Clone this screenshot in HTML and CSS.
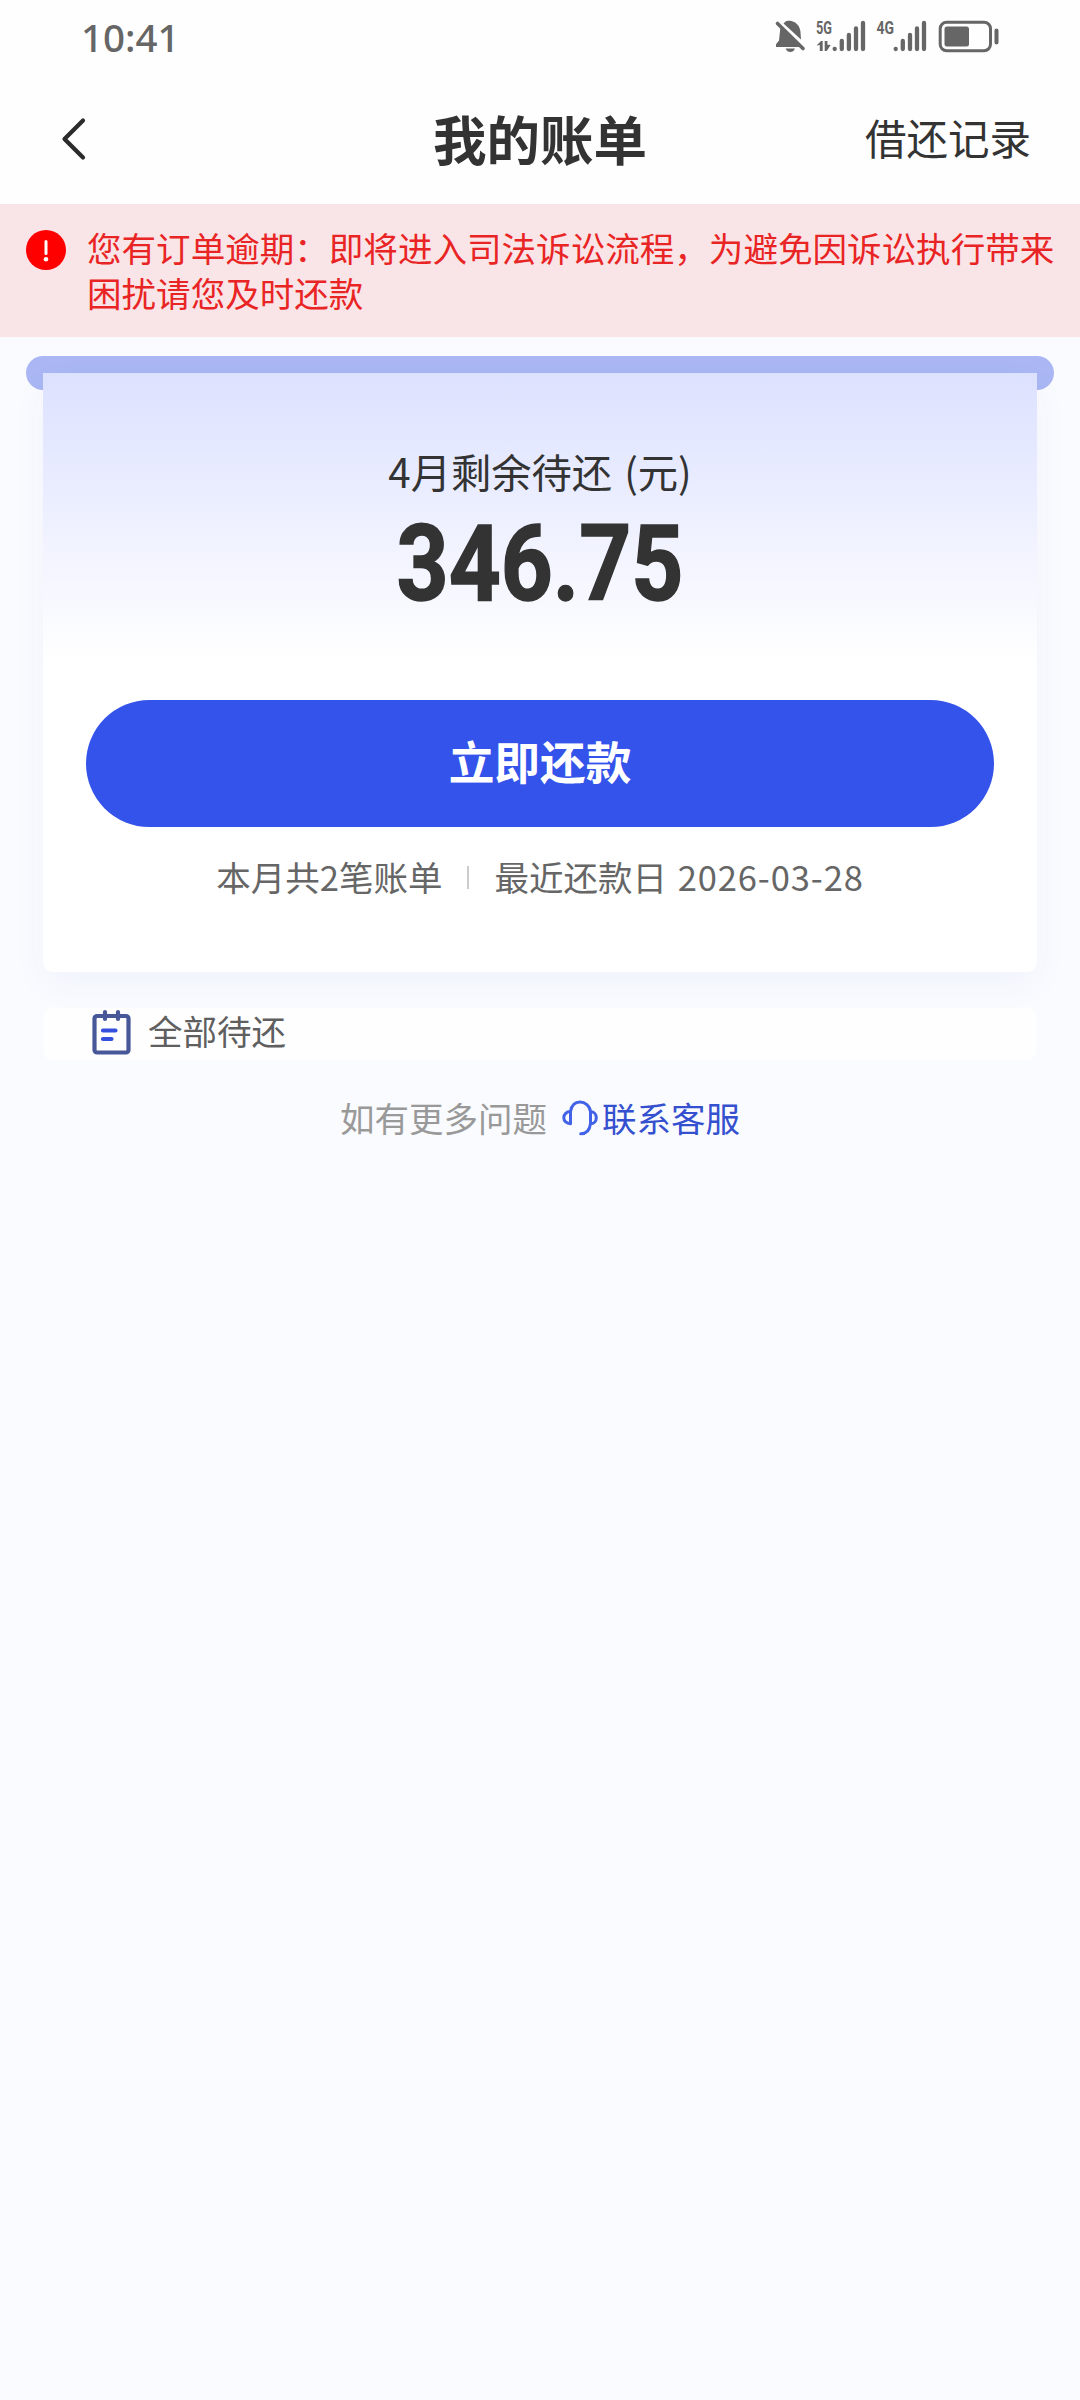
FILE: index.html
```html
<!DOCTYPE html>
<html lang="zh-CN">
<head>
<meta charset="utf-8">
<meta name="viewport" content="width=device-width">
<title>我的账单</title>
<link rel="stylesheet" href="styles.css">
</head>
<body>
<div class="status">
  <span class="time">10:41</span>
  <svg class="status-icons" width="232" height="70" viewBox="770 0 232 70" fill="#666">
    <!-- muted bell -->
    <path d="M785 22c1-1.200 3.800-1.800 6.500-1 5.500 1.500 8.500 5.500 9 11l.5 7.500-17.500-16z"/>
    <path d="M780.500 26.500l20.500 20.500h-25v-2.800l3-3.700z"/>
    <path d="M777.500 23.500l25.500 25" stroke="#666" stroke-width="3.600" stroke-linecap="round"/>
    <path d="M785.500 48.500h9.500c-1.800 4.700-7.600 4.700-9.500 0z"/>
    <!-- first SIM -->
    <text class="net" x="816" y="34.300" textLength="16" lengthAdjust="spacingAndGlyphs">5G</text>
    <path d="M816.500 45.500l4.500-4.500h1.700v10h-2.900v-6zM824.700 41h2.700v3.700l3.300.3-4 6h-2z"/>
    <g stroke="#666" stroke-width="4.300" stroke-linecap="round">
      <path d="M834.700 48.800v.2M841.800 41v8M848.900 35v14M856 28.500v20.500M863 23v26"/>
      <path d="M895.700 48.800v.2M902.800 41v8M910 35v14M917 28.500v20.500M924 23v26"/>
    </g>
    <!-- second SIM -->
    <text class="net" x="876.500" y="34.300" textLength="17.500" lengthAdjust="spacingAndGlyphs">4G</text>
    <!-- battery -->
    <rect x="940.200" y="22.200" width="50.300" height="28.600" rx="6.500" fill="none" stroke="#666" stroke-width="3"/>
    <rect x="944.500" y="26.500" width="24.500" height="20" rx="2.500"/>
    <rect x="994.500" y="28.500" width="4" height="16" rx="2"/>
  </svg>
</div>
<header class="nav">
  <svg class="back" width="30" height="48" viewBox="0 0 30 48" fill="none" stroke="#2b2b2b" stroke-width="4.200" stroke-linecap="round" stroke-linejoin="round"><path d="M23 5.500L4.500 24 23 42.500"/></svg>
  <h1 class="title">我的账单</h1>
  <a class="records">借还记录</a>
</header>
<section class="alert">
  <svg class="alert-icon" width="40" height="40" viewBox="0 0 40 40"><circle cx="20" cy="20" r="20" fill="#fe0000"/><path d="M20 11.500v12" stroke="#fff" stroke-width="3" stroke-linecap="round"/><circle cx="20" cy="29.300" r="2.300" fill="#fff"/></svg>
  <p class="alert-text">您有订单逾期：即将进入司法诉讼流程，为避免因诉讼执行带来困扰请您及时还款</p>
</section>
<main class="main">
  <div class="slot">
    <section class="card">
      <p class="label">4月剩余待还 (元)</p>
      <p class="amount">346.75</p>
      <button class="pay">立即还款</button>
      <p class="info"><span>本月共2笔账单</span><i class="sep"></i><span>最近还款日 <span class="date">2026-03-28</span></span></p>
    </section>
  </div>
  <section class="all">
    <svg width="40" height="46" viewBox="0 0 40 46" fill="none" stroke-linecap="round"><rect x="2.500" y="7" width="34" height="36.500" rx="2.500" stroke="#485798" stroke-width="4.200"/><path d="M13 3v7M26 3v7" stroke="#485798" stroke-width="4.200"/><path d="M11 21.500h12.500M11 30h8.500" stroke="#3450dc" stroke-width="4.200"/></svg>
    <span>全部待还</span>
  </section>
  <p class="help"><span>如有更多问题</span>
    <svg width="36" height="36" viewBox="0 0 36 36" fill="none" stroke="#4263e8" stroke-width="3" stroke-linecap="round" stroke-linejoin="round"><path d="M8.500 11.500v12.200C4.500 23.700 1.800 21 1.800 17.700s2.700-6.200 6.700-6.200C9.500 5.700 13 2 18 2s9.800 3.700 10.500 9.500c3.500.2 5.800 2.900 5.800 6.200s-2.300 6-5.800 6v-12.200M28.500 23.700c-.8 6.300-4.500 10-9.800 10"/></svg>
    <a class="link">联系客服</a></p>
</main>
</body>
</html>
```
FILE: styles.css
```css
* { box-sizing: border-box; }
body {
  margin: 0;
  min-height: 2400px;
  background: #f9fbff;
  color: #333;
  font-family: "Noto Sans CJK SC", sans-serif;
}
p, h1 { margin: 0; font-weight: 400; }
.status {
  display: flex;
  justify-content: space-between;
  height: 76px;
  padding: 0 78px 0 81px;
  background: #fefefe;
}
.time {
  color: #666;
  font: 500 38.500px/74px "Noto Sans", sans-serif;
}
.net { font: 700 19px "Roboto", sans-serif; }
.nav {
  display: grid;
  grid-template-columns: 1fr auto 1fr;
  align-items: center;
  height: 128px;
  padding: 0 49px 0 60px;
  background: #fefefe;
}
.back { margin-top: -3px; }
.title { margin: -5px 0 0 -11px; font-size: 53.500px; font-weight: 700; line-height: 122px; }
.records { justify-self: end; margin-top: -6px; font-size: 41.500px; }
.alert {
  display: flex;
  gap: 21px;
  height: 133px;
  padding: 21px 22px 0 26px;
  background: #f9e4e7;
}
.alert-icon { flex: none; margin-top: 5px; }
.alert-text {
  width: 970px;
  color: #e92424;
  font-size: 34.560px;
  line-height: 45px;
}
.main { padding-top: 19px; }
.slot {
  margin: 0 26px;
  height: 34px;
  padding: 17px 17px 0;
  border-radius: 17px;
  background: #aab7f4;
}
.card {
  height: 599px;
  padding: 73px 43px 0;
  border-radius: 0 0 10px 10px;
  background: linear-gradient(#dce1ff, #fff 290px);
  box-shadow: 0 12px 36px rgba(60, 70, 190, .045);
  text-align: center;
}
.label { font-size: 40.300px; line-height: 50px; word-spacing: 3px; }
.amount {
  height: 100px;
  margin-top: 19px;
  font: 700 105px/100px "Roboto", sans-serif;
  -webkit-text-stroke: 1.500px #333;
  transform: scaleX(.865);
}
.pay {
  display: block;
  width: 100%;
  height: 127px;
  margin-top: 85px;
  padding: 0 0 6px;
  border: 0;
  border-radius: 64px;
  background: #3453ea;
  color: #fff;
  font: 700 45.700px/121px "Noto Sans CJK SC", sans-serif;
}
.info {
  display: flex;
  justify-content: center;
  align-items: center;
  gap: 25px;
  margin-top: 25px;
  color: #666;
  font-size: 34.500px;
  line-height: 48px;
  white-space: nowrap;
}
.sep { width: 2px; height: 23px; margin-top: 2px; background: #ccc; }
.date { margin-left: 3px; letter-spacing: .9px; }
.all {
  display: flex;
  align-items: center;
  gap: 16px;
  height: 52px;
  margin: 618px 43px 0;
  padding: 0 0 6px 49px;
  border-radius: 10px;
  background: #fefeff;
  color: #5f5f5f;
  font-size: 34.500px;
  line-height: 44px;
}
.all svg { margin-top: 2px; }
.all span { margin-top: -3px; }
.help {
  display: flex;
  justify-content: center;
  align-items: center;
  margin-top: 32px;
  color: #999;
  font-size: 34.500px;
  line-height: 50px;
}
.help svg { margin: 2px 4px 0 15px; }
.link { color: #3450cf; }
```
